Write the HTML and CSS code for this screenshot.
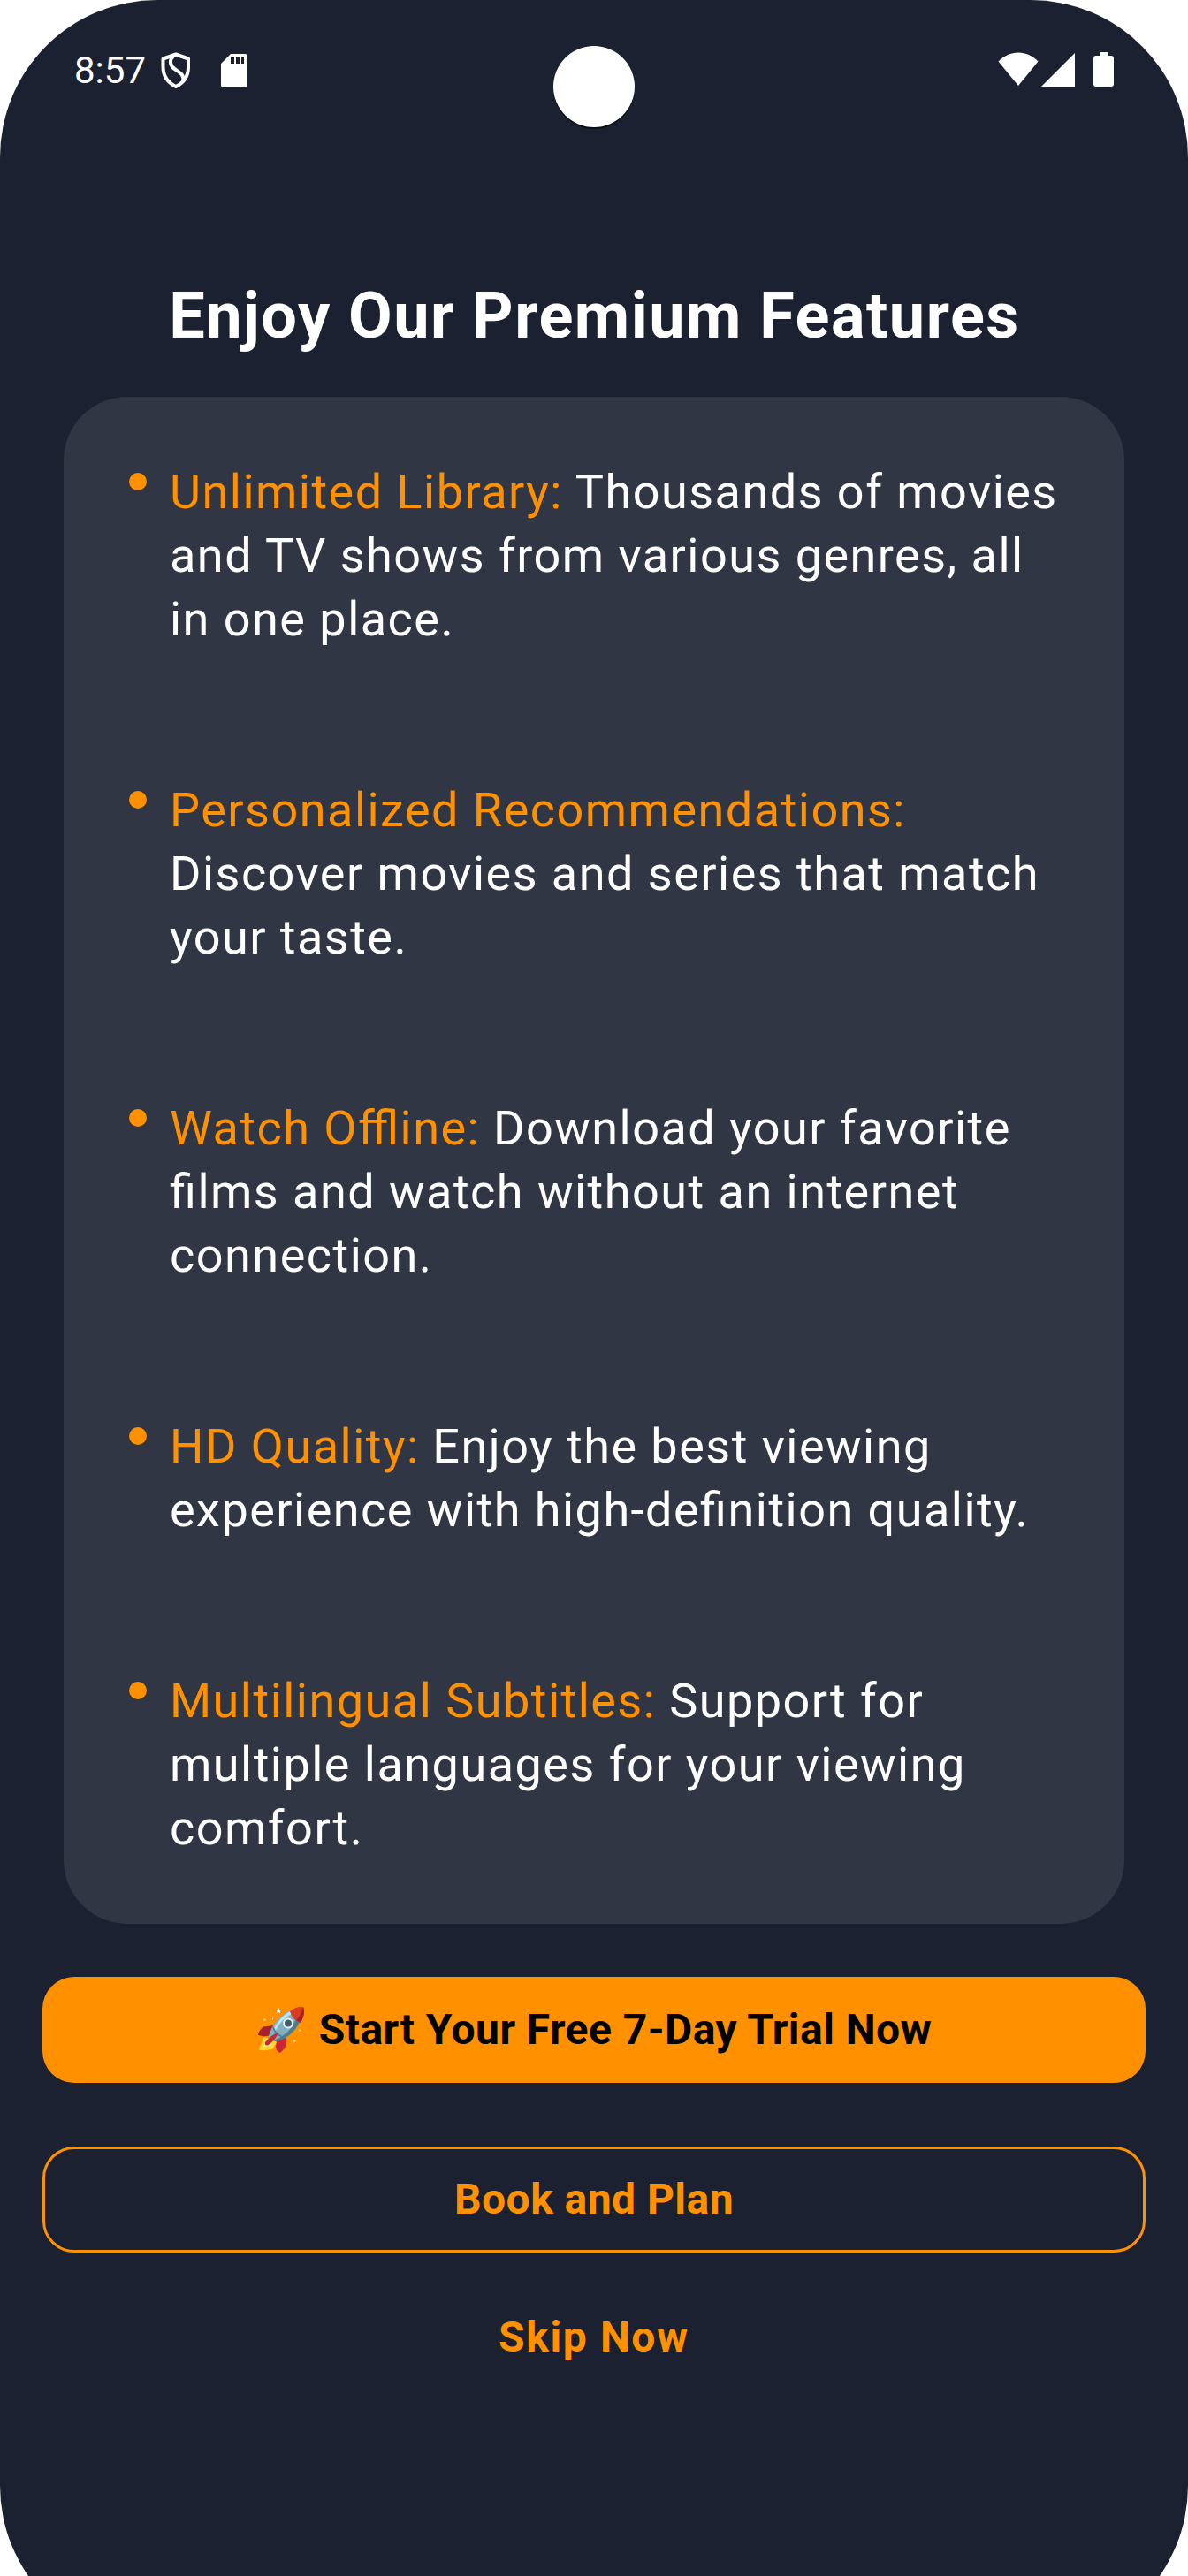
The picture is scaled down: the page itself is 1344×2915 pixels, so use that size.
FILE: index.html
```html
<!DOCTYPE html>
<html lang="en">
<head>
<meta charset="utf-8">
<title>Premium Features</title>
<link rel="stylesheet" href="styles.css">
</head>
<body>
<div class="viewport">
  <div class="phone">
    <header class="status">
      <span class="time">8:57</span>
      <svg class="shield" width="36" height="42" viewBox="0 0 36 42" fill="none" stroke="#fff" stroke-width="4" stroke-linejoin="round">
        <path d="M18 2.500 L32 7.500 V17 C32 27 27 34.500 18 39 C9 34.500 3.500 27 3.500 17 V7.500 Z"/>
        <path d="M15 4.500 C10 9 11.500 15.500 16.500 19 C23 23.500 27 25.500 26.500 32.500"/>
      </svg>
      <svg class="sd" width="30" height="38" viewBox="0 0 30 38">
        <path fill="#fff" fill-rule="evenodd" d="M11 0 H27 Q30 0 30 3 V35 Q30 38 27 38 H3 Q0 38 0 35 V11 Z M11 4 V11 H15 V4 Z M17 4 V11 H21 V4 Z M23 4 V11 H26 V4 Z"/>
      </svg>
      <span class="spacer"></span>
      <svg class="wifi" width="46" height="38" viewBox="0 0 46 38"><path fill="#fff" d="M0.500 10.500 C13 -3 33 -3 45.500 10.500 L23 38 Z"/></svg>
      <svg class="signal" width="38" height="38" viewBox="0 0 38 38"><path fill="#fff" d="M0 38 L38 0 V38 Z"/></svg>
      <svg class="battery" width="23" height="39" viewBox="0 0 23 39"><path fill="#fff" d="M7 0 H16.500 V4 H20 Q23 4 23 7 V36 Q23 39 20 39 H3 Q0 39 0 36 V7 Q0 4 3 4 H7 Z"/></svg>
      <span class="camera"></span>
    </header>
    <main>
      <h1 class="title">Enjoy Our Premium Features</h1>
      <ul class="features">
        <li><b>Unlimited Library:</b> Thousands of movies and TV shows from various genres, all in one place.</li>
        <li><b>Personalized Recommendations:</b> Discover movies and series that match your taste.</li>
        <li><b>Watch Offline:</b> Download your favorite films and watch without an internet connection.</li>
        <li><b>HD Quality:</b> Enjoy the best viewing experience with high-definition quality.</li>
        <li><b>Multilingual Subtitles:</b> Support for multiple languages for your viewing comfort.</li>
      </ul>
      <div class="actions">
        <button class="btn primary">
          <svg class="rocket" width="54" height="54" viewBox="0 0 54 54">
            <path fill="#a9202c" d="M18 22 L6 23.500 Q1 27 0 33 Q6 35 13 33.500 Z"/>
            <path fill="#c62836" d="M32 35 Q33 43 30 48 L25 53 Q20 51 20 46 L21 39 Z"/>
            <path fill="#fdd835" d="M7 35 Q4 42 1 49 Q3 51 8 50 L16 49 L21 41 Z"/>
            <path fill="#fff59d" d="M9 37 L6 46 L16 44 Z"/>
            <path fill="#82aec0" d="M12 34 C16 19 28 4 50 1 C55 6 45 30 22 40 Q15 40 12 34 Z"/>
            <path fill="#4b7d90" d="M47 18 C42 29 33 36 22 40 Q19 40 17 39 C29 35 38 27 42 16 Z"/>
            <path fill="#b9e4ea" d="M18 25 C23 16 29 10 36 6 L38 9 C29 14 23 21 20 28 Z"/>
            <path fill="none" stroke="#4b7d90" stroke-width="1.500" d="M17 24 Q20 34 32 36"/>
            <path fill="#db3b21" d="M36 6 Q44 0 51 1 Q54 8 48 19 Q39 16 36 6 Z"/>
            <path fill="#a9202c" d="M51 1 Q54 8 48 19 L43 16 Q49 10 51 1 Z"/>
            <circle cx="34" cy="19.500" r="5" fill="#455a64" stroke="#e0f2f5" stroke-width="2"/>
            <path fill="#c62836" d="M23 30 Q14 33 8 41 Q7 46 12 44 Q20 38 23 30 Z"/>
            <path fill="#fff" d="M23.300 2 l1 2 2 .3 -1.500 1.500 .3 2.200 -1.800-1 -2 1 .4-2.200 -1.400-1.500 2-.3Z"/>
            <g fill="#fff3c4"><circle cx="7.300" cy="15.700" r="1.200"/><circle cx="16.500" cy="14.700" r=".7"/><circle cx="47.300" cy="27.700" r="1.100"/><circle cx="41.300" cy="39.700" r="1.200"/></g>
          </svg>
          <span>Start Your Free 7-Day Trial Now</span>
        </button>
        <button class="btn outline">Book and Plan</button>
        <button class="btn text">Skip Now</button>
      </div>
    </main>
  </div>
</div>
</body>
</html>
```

FILE: styles.css
```css
* { box-sizing: border-box; }
body { margin: 0; background: #fff; font-family: Roboto, sans-serif; }
.viewport { height: 2915px; overflow: hidden; }
.phone { width: 1344px; height: 2991px; border-radius: 178px; background: #1b2130; color: #fff; }
.status { position: relative; display: flex; align-items: flex-start; height: 156px; padding: 59px 84px 0; }
.time { font-size: 42px; line-height: 42px; width: 97px; }
.sd { margin: 2px 0 0 33px; }
.spacer { flex: 1; }
.signal { margin: 1px 21px 0 3px; }
.camera { position: absolute; left: 626px; top: 52px; width: 92px; height: 92px; border-radius: 50%; background: #fff; box-shadow: 0 2px 0 #0c0e13; }
.title { margin: 0; padding: 157px 0 0 1px; height: 293px; font-size: 72px; line-height: 90px; font-weight: 700; letter-spacing: 1.500px; text-align: center; }
.features { list-style: none; margin: 0 72px; padding: 72px; border-radius: 72px; background: #303643; font-size: 54px; line-height: 72px; letter-spacing: 1.480px; font-feature-settings: "liga" 1; }
.features li { display: flow-root; position: relative; padding-left: 48px; }
.features li + li { margin-top: 144px; }
.features li::before { content: ""; position: absolute; left: 2px; top: 14px; width: 20px; height: 20px; border-radius: 50%; background: #ff9000; }
.features b { font-weight: 400; color: #ff9000; }
.actions { display: flex; flex-direction: column; gap: 72px; padding: 60px 48px 0; }
.btn { display: flex; align-items: center; justify-content: center; height: 120px; padding: 0; border: 0; border-radius: 36px; background: none; color: #ff9000; font: 700 48px/60px Roboto, sans-serif; letter-spacing: 0.450px; }
.primary { background: #ff9000; color: #000; gap: 15px; padding-left: 2px; }
.outline { border: 3px solid #ff9000; }
.text { height: 60px; margin-top: -6px; letter-spacing: 1.600px; }
```
